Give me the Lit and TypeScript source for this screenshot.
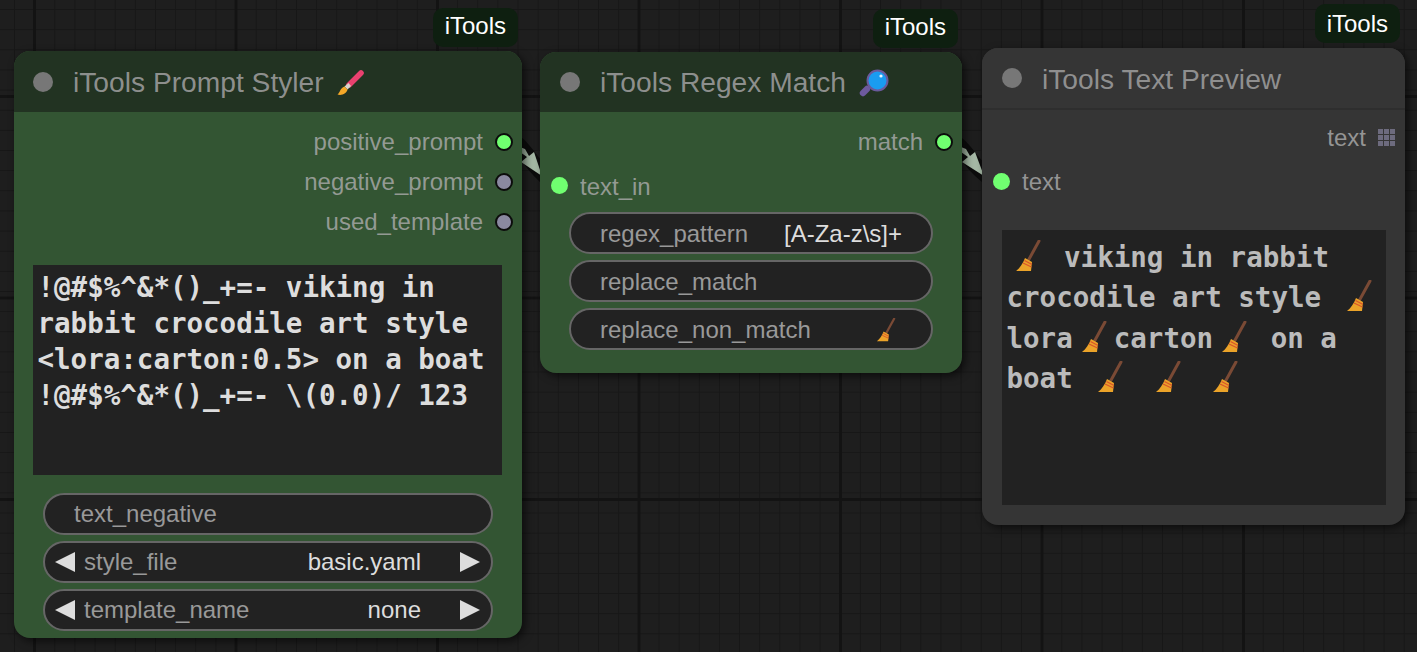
import { LitElement, html, css, svg } from 'lit';
import { customElement } from 'lit/decorators.js';

const broom = (cls = 'broom') => html`<svg class=${cls} viewBox="0 0 41 32">
  <path d="M32 1 L21 21" stroke="#7a4a35" stroke-width="3" stroke-linecap="round" fill="none"/>
  <path d="M18 18 L25 22 L24 31 L9 31 C13 28 16 23 18 18 Z" fill="#eba329"/>
  <path d="M16 23 L24.5 27 M17.5 20.5 L25 24.5" stroke="#d9542b" stroke-width="1.2" fill="none"/>
</svg>`;

const brush = html`<svg class="emoji" viewBox="0 0 40 40">
  <path d="M32 11 L20 23" stroke="#e9416f" stroke-width="5.6" stroke-linecap="round" fill="none"/>
  <path d="M19.5 21 L22 24 L18.5 27.5 L15.5 24.5 Z" fill="#d8d4cc"/>
  <path d="M15.5 24.5 L18.5 27.5 C18 31 13 34 8.5 32.5 C11 31 11 26 15.5 24.5 Z" fill="#f4a828"/>
</svg>`;

const lens = html`<svg class="emoji" viewBox="0 0 40 40">
  <path d="M16 27 L12 31" stroke="#6d5a9e" stroke-width="6.4" stroke-linecap="round" fill="none"/>
  <circle cx="26.5" cy="18.5" r="10" fill="#1a9cf0" stroke="#6a5a9c" stroke-width="2"/>
  <circle cx="30" cy="14" r="1.6" fill="#e8f6ff"/>
</svg>`;

const grip = svg`<svg class="grip" viewBox="0 0 17 17">
  ${[0, 6, 12].flatMap((y) => [0, 6, 12].map((x) => svg`<rect x=${x} y=${y} width="5" height="5" fill="#6d6b7e"/>`))}
</svg>`;

@customElement('app-root')
export class AppRoot extends LitElement {
  static styles = css`
    :host {
      display: block;
      font-family: 'Liberation Sans', Arial, sans-serif;
    }
    .canvas {
      position: relative;
      width: 1417px;
      height: 652px;
      overflow: hidden;
      background-color: #1e1e1e;
      background-image:
        linear-gradient(90deg, #131313 3px, transparent 3px),
        linear-gradient(#131313 3px, transparent 3px),
        linear-gradient(90deg, #171717 1px, transparent 1px),
        linear-gradient(#171717 1px, transparent 1px);
      background-size: 201.5px 201.5px, 201.5px 201.5px, 20.15px 20.15px, 20.15px 20.15px;
      background-position: 33px 0, 0 95px, 14px 0, 0 9px;
    }
    .links {
      position: absolute;
      inset: 0;
    }
    .node {
      position: absolute;
      display: flex;
      flex-direction: column;
      box-sizing: border-box;
      border-radius: 16px;
      background: #335533;
      box-shadow: 3px 3px 8px rgba(0, 0, 0, 0.6);
    }
    .styler { left: 14px; top: 51px; width: 508px; height: 587px; }
    .regex { left: 540px; top: 52px; width: 422px; height: 321px; }
    .preview { left: 982px; top: 48px; width: 423px; height: 477px; background: #353535; }

    .tag {
      position: absolute;
      right: 4px;
      top: -43px;
      height: 39px;
      box-sizing: border-box;
      padding: 0 12px 3px;
      display: flex;
      align-items: center;
      border-radius: 10px;
      background: #0e1f10;
      color: #fff;
      font-size: 24px;
    }
    .preview .tag { right: 5px; top: -44px; padding-bottom: 0; }

    .head {
      flex: none;
      height: 61px;
      display: flex;
      align-items: center;
      box-sizing: border-box;
      padding: 2px 0 0 19px;
      border-radius: 16px 16px 0 0;
      background: #223322;
      color: rgba(153, 153, 153, 0.92);
      font-size: 28.2px;
    }
    .regex .head { height: 60px; padding: 0 0 0 20px; }
    .preview .head { height: 62px; padding-left: 20px; background: #353535; border-bottom: 2px solid #2e2e2e; }
    .lamp {
      flex: none;
      width: 20px;
      height: 20px;
      margin: -2px 20px 0 0;
      border-radius: 50%;
      background: #777;
    }
    .regex .lamp { margin-top: 0; }
    .emoji {
      flex: none;
      width: 40px;
      height: 40px;
      margin: -2px 0 0 5px;
    }
    .regex .emoji { margin-top: 0; }

    .rows {
      display: flex;
      flex-direction: column;
      gap: 4px;
      padding-top: 10px;
    }
    .styler .rows { gap: 0; }
    .row {
      height: 40px;
      display: flex;
      align-items: center;
      color: rgba(170, 170, 170, 0.83);
      font-size: 24px;
    }
    .row.out { justify-content: flex-end; gap: 12px; padding-right: 9px; }
    .row.in { gap: 12px; padding-left: 11px; }
    .preview .rows { padding-top: 8px; }
    .preview .row.out { padding-right: 10px; }
    .preview .row.in .dot { margin-bottom: 2px; }
    .regex .row.in { box-sizing: border-box; padding-top: 2px; }
    .regex .row.in .dot { margin-bottom: 4px; }
    .dot {
      flex: none;
      box-sizing: border-box;
      width: 17px;
      height: 17px;
      border-radius: 50%;
      background: #70ff70;
    }
    .out .dot { width: 18px; height: 18px; border: 2px solid #0c0c0c; }
    .dot.idle { background: #8a88a0; }
    .grip { flex: none; width: 17px; height: 17px; margin-bottom: 2px; }

    .text {
      box-sizing: border-box;
      background: #222;
      padding: 4px 4.5px;
      font-family: 'DejaVu Sans Mono', 'Liberation Mono', monospace;
      font-weight: bold;
      font-size: 27.5px;
    }
    .styler .text {
      height: 210px;
      margin: 23px 20px 18px 19px;
      line-height: 36px;
      color: #ddd;
    }
    .preview .text {
      height: 275px;
      margin: 28px 19px 0 20px;
      padding: 7px 4.5px 0;
      line-height: 40.4px;
      color: #bbb;
    }
    .broom {
      width: 41px;
      height: 32px;
      vertical-align: -5px;
    }
    .broom-sm {
      display: block;
      width: 31px;
      height: 24px;
      margin-right: 1px;
    }

    .widgets {
      display: flex;
      flex-direction: column;
      gap: 6px;
      margin: 0 29px;
    }
    .regex .widgets { margin: 6px 29px 0; }
    .regex .widget { padding-top: 1px; }
    .widget {
      height: 42px;
      box-sizing: border-box;
      display: flex;
      align-items: center;
      border: 2px solid #666;
      border-radius: 21px;
      background: #222;
      padding: 0 29px;
      color: #999;
      font-size: 24px;
    }
    .widget.combo { padding: 0 11px 0 10px; }
    .value {
      margin-left: auto;
      color: #ddd;
    }
    .combo .value { margin-right: 39px; }
    .arrow {
      flex: none;
      width: 20px;
      height: 20px;
      background: #ddd;
    }
    .arrow.l { clip-path: polygon(0 50%, 100% 0, 100% 100%); margin-right: 9px; }
    .arrow.r { clip-path: polygon(0 0, 100% 50%, 0 100%); }
  `;

  private combo(label: string, value: string) {
    return html`<div class="widget combo">
      <i class="arrow l"></i><span>${label}</span><span class="value">${value}</span><i class="arrow r"></i>
    </div>`;
  }

  render() {
    return html`
      <div class="canvas">
        <svg class="links" viewBox="0 0 1417 652">
          <path d="M510 140 C525 146 530 165 550 180" stroke="#0c0c0c" stroke-width="16" fill="none"/>
          <path d="M950 140 C965 146 970 165 990 178" stroke="#0c0c0c" stroke-width="16" fill="none"/>
          <path d="M520 147 L525 149 L529 156 L534 152 L542 176 L521 162 L527 157 L520 152 Z" fill="#a5b8a5"/>
          <path d="M961 147 L966 149 L970 156 L975 152 L984 176 L962 162 L968 157 L961 152 Z" fill="#a5b8a5"/>
        </svg>

        <section class="node styler">
          <div class="tag">iTools</div>
          <header class="head"><i class="lamp"></i>iTools Prompt Styler ${brush}</header>
          <div class="rows">
            <div class="row out">positive_prompt<i class="dot"></i></div>
            <div class="row out">negative_prompt<i class="dot idle"></i></div>
            <div class="row out">used_template<i class="dot idle"></i></div>
          </div>
          <div class="text">!@#$%^&amp;*()_+=- viking in rabbit crocodile art style &lt;lora:carton:0.5&gt; on a boat !@#$%^&amp;*()_+=- \\(0.0)/ 123</div>
          <div class="widgets">
            <div class="widget">text_negative</div>
            ${this.combo('style_file', 'basic.yaml')}
            ${this.combo('template_name', 'none')}
          </div>
        </section>

        <section class="node regex">
          <div class="tag">iTools</div>
          <header class="head"><i class="lamp"></i>iTools Regex Match ${lens}</header>
          <div class="rows">
            <div class="row out">match<i class="dot"></i></div>
            <div class="row in"><i class="dot"></i>text_in</div>
          </div>
          <div class="widgets">
            <div class="widget">regex_pattern<span class="value">[A-Za-z\\s]+</span></div>
            <div class="widget">replace_match</div>
            <div class="widget">replace_non_match<span class="value">${broom('broom-sm')}</span></div>
          </div>
        </section>

        <section class="node preview">
          <div class="tag">iTools</div>
          <header class="head"><i class="lamp"></i>iTools Text Preview</header>
          <div class="rows">
            <div class="row out">text${grip}</div>
            <div class="row in"><i class="dot"></i>text</div>
          </div>
          <div class="text">${broom()} viking in rabbit crocodile art style ${broom()} lora${broom()}carton${broom()} on a boat ${broom()} ${broom()} ${broom()}</div>
        </section>
      </div>
    `;
  }
}
